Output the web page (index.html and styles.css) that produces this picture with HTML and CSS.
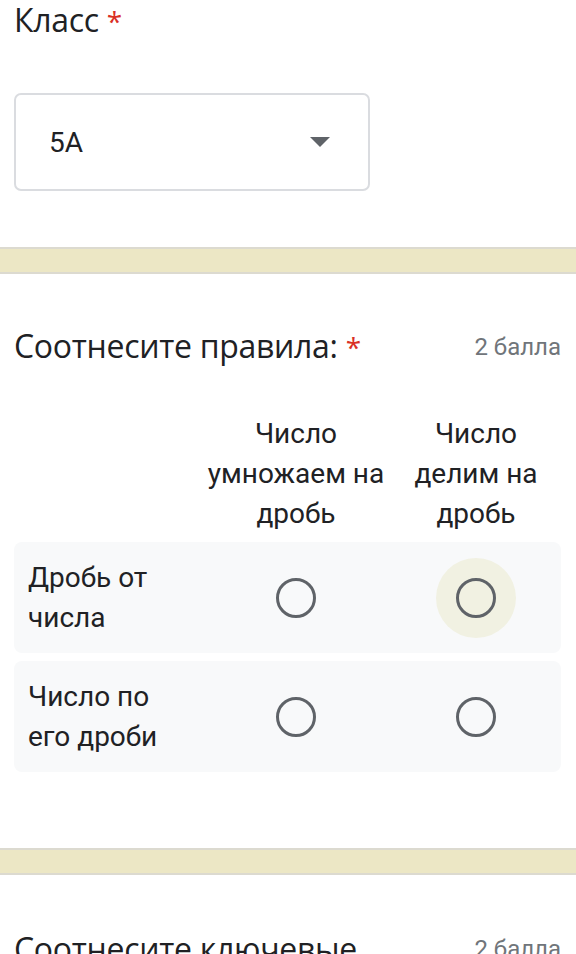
FILE: index.html
```html
<!DOCTYPE html>
<html lang="ru">
<head>
    <meta charset="UTF-8">
    <title>Форма</title>
    <link rel="stylesheet" href="styles.css">
</head>
<body>
    <div class="card card-top">
        <div class="q-title">Класс <span class="req">*</span></div>
        <div class="select">
            <span>5А</span>
            <span class="arrow"></span>
        </div>
    </div>

    <div class="band"></div>

    <div class="card card-mid">
        <div class="q-head">
            <div class="q-title">Соотнесите правила: <span class="req">*</span></div>
            <div class="points">2 балла</div>
        </div>

        <div class="grid-head">
            <div></div>
            <div class="col-title">Число<br>умножаем на<br>дробь</div>
            <div class="col-title">Число<br>делим на<br>дробь</div>
        </div>
        <div class="grid-row">
            <div class="row-title">Дробь от<br>числа</div>
            <div class="cell"><span class="radio"></span></div>
            <div class="cell"><span class="radio focus"></span></div>
        </div>
        <div class="grid-row">
            <div class="row-title">Число по<br>его дроби</div>
            <div class="cell"><span class="radio"></span></div>
            <div class="cell"><span class="radio"></span></div>
        </div>
    </div>

    <div class="band"></div>

    <div class="card card-bottom">
        <div class="q-head">
            <div class="q-title">Соотнесите ключевые</div>
            <div class="points">2 балла</div>
        </div>
    </div>
</body>
</html>
```

FILE: styles.css
```css
*{
    box-sizing: border-box;
}
body{
    margin: 0;
    background: #fff;
    color: #202124;
    font-family: Roboto, "Liberation Sans", sans-serif;
    overflow: hidden;
}
.card{
    padding: 0 15px 0 14px;
    background: #fff;
}
.card-top{
    padding-top: 0;
    padding-bottom: 56px;
}
.card-mid{
    padding-top: 52px;
    padding-bottom: 68px;
}
.card-bottom{
    padding-top: 54px;
}
.q-title{
    font-family: "Open Sans", Roboto, sans-serif;
    font-size: 32px;
    line-height: 40px;
    color: #202124;
    letter-spacing: -0.3px;
    white-space: nowrap;
}
.req{
    color: #d93025;
    font-size: 28px;
}
.q-head{
    display: flex;
    justify-content: space-between;
    align-items: center;
}
.points{
    font-size: 24px;
    color: #70757a;
}
.select{
    margin-top: 52px;
    width: 356px;
    height: 98px;
    border: 2px solid #dadce0;
    border-radius: 7px;
    display: flex;
    align-items: center;
    justify-content: space-between;
    padding: 0 38px 0 33px;
    font-size: 28px;
}
.arrow{
    width: 0;
    height: 0;
    border-left: 10px solid transparent;
    border-right: 10px solid transparent;
    border-top: 10px solid #5f6368;
}
.band{
    height: 27px;
    background: #ece7c5;
    border-top: 2px solid #dcdad0;
    border-bottom: 2px solid #dcdad0;
}
.grid-head,
.grid-row{
    display: grid;
    grid-template-columns: 192px 180px 180px;
    width: 547px;
}
.grid-head{
    margin-top: 47px;
    margin-bottom: 8px;
}
.col-title{
    text-align: center;
    font-size: 28px;
    line-height: 40px;
    white-space: nowrap;
}
.grid-row{
    background: #f8f9fa;
    border-radius: 8px;
    height: 111px;
    align-items: center;
    margin-bottom: 8px;
}
.row-title{
    padding-left: 14px;
    font-size: 28px;
    line-height: 40px;
    white-space: nowrap;
}
.cell{
    display: flex;
    justify-content: center;
    align-items: center;
}
.radio{
    display: block;
    width: 40px;
    height: 40px;
    border: 3px solid #5f6368;
    border-radius: 50%;
}
.radio.focus{
    background: #f1f1e2;
    box-shadow: 0 0 0 20px #f1f1e2;
}
```
